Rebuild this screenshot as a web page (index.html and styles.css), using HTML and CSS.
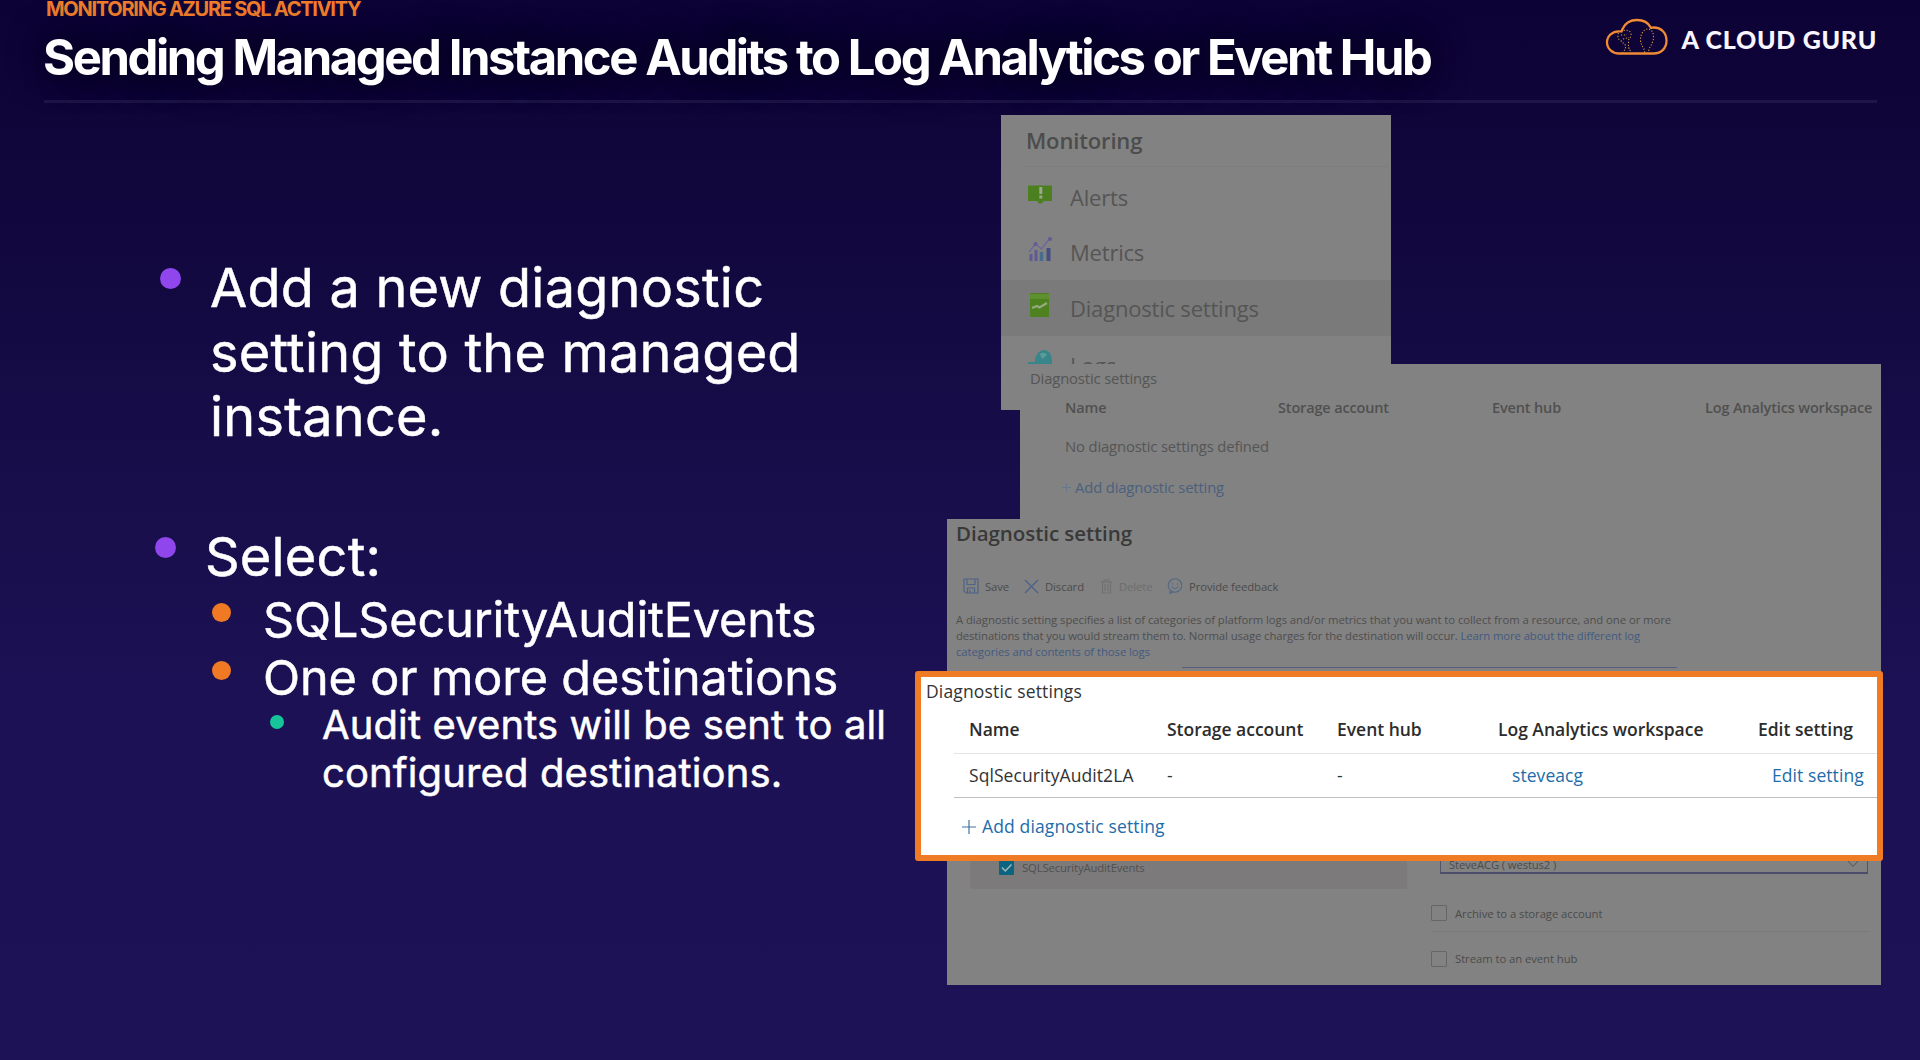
FILE: index.html
```html
<!DOCTYPE html>
<html lang="en">
<head>
<meta charset="utf-8">
<title>Sending Managed Instance Audits to Log Analytics or Event Hub</title>
<link rel="stylesheet" href="styles.css">
</head>
<body>
<main class="slide">
  <header class="header">
    <div class="titles">
      <p class="eyebrow">MONITORING AZURE SQL ACTIVITY</p>
      <h1 class="title">Sending Managed Instance Audits to Log Analytics or Event Hub</h1>
    </div>
    <div class="brand">
      <svg class="cloud" viewBox="0 0 66 42" width="66" height="42" fill="none">
        <path d="M15 37.5H49.5C57.500 37.500 62.500 32 62.500 24.800C62.500 17 57.500 11.500 49.500 11.500C48.700 11.500 47.900 11.600 47 11.800C44.500 7 39 4 33 4C26.500 4 21 7.500 18.500 13L17.500 15.500C16.600 15.300 15.800 15.300 14.800 15.300C8.500 15.300 3 20 3 26.300C3 32.800 8.500 37.500 15 37.500Z" stroke="#f08a35" stroke-width="2.3"/>
        <g stroke="#dd9a45" stroke-width="1.100" stroke-dasharray="1.200 1.700">
          <path d="M17 15.500C21 13 27 14 27 18.500C27 22 24 22.500 24.500 26C25 29 23 31 27.500 36.500"/>
          <path d="M14.500 17C13 21 14.500 24 17.500 25C20 26 18 28 21.500 29C22 32 21 34 18.500 36.500"/>
          <path d="M17 19H23M19 23L25 21.500"/>
          <path d="M40.500 36.500C41.500 33 36.500 30 36.500 24C36.500 17.500 40 13 44 13C48 13 49.500 17 49.500 21.500C49.500 28 44 32 44.500 36.500"/>
        </g>
      </svg>
      <span class="wordmark">A CLOUD GURU</span>
    </div>
  </header>

  <ul class="points">
    <li class="point point-first">Add a new diagnostic<br>setting to the managed<br>instance.</li>
    <li class="point point-select">Select:</li>
    <li class="sub">SQLSecurityAuditEvents</li>
    <li class="sub">One or more destinations</li>
    <li class="detail">Audit events will be sent to all<br>configured destinations.</li>
  </ul>

  <section class="shot menu">
    <h2 class="menu-title">Monitoring</h2>
    <div class="menu-item">
      <svg width="26" height="20" viewBox="0 0 26 20"><path d="M1 1.500H25V17H17L14.500 19.500H12L10 17H1Z" fill="#4c7f20"/><path d="M12.300 3H15.300V10H12.300ZM12.300 11.500H15.300V14.500H12.300Z" fill="#9ba88e"/></svg>
      <span>Alerts</span>
    </div>
    <div class="menu-item">
      <svg width="26" height="26" viewBox="0 0 26 26" fill="none"><path d="M4 18V25M9 14V25" stroke="#5f5b92" stroke-width="3"/><path d="M14.500 16V25" stroke="#466c8e" stroke-width="3.500"/><path d="M21.500 12V25" stroke="#464f83" stroke-width="4"/><path d="M2 16L8.500 8L14.500 13L23 2" stroke="#6d67a0" stroke-width="1.500"/><circle cx="8.500" cy="8" r="2" fill="#615c91"/><circle cx="23" cy="3" r="2" fill="#615c91"/></svg>
      <span>Metrics</span>
    </div>
    <div class="menu-item selected">
      <svg width="26" height="26" viewBox="0 0 26 26" fill="none"><rect x="3" y="1" width="19" height="24" rx="1" fill="#4d821f"/><path d="M3 2H22V7H3Z" fill="#5e902f"/><path d="M5 16L10 14L12.500 15.500L20 11" stroke="#96aa81" stroke-width="2.200"/></svg>
      <span>Diagnostic settings</span>
    </div>
    <div class="menu-item logs">
      <svg width="26" height="26" viewBox="0 0 26 26"><path d="M8 13C8 6 12 1 17 1S25 5 25 13V20H1V13Z" fill="#39868a"/><path d="M13 5Q17 2 20 6L15 10Z" fill="#5c9a9c"/></svg>
      <span>Logs</span>
    </div>
  </section>

  <section class="shot empty-list">
    <h2 class="list-title">Diagnostic settings</h2>
    <div class="list-head"><span>Name</span><span>Storage account</span><span>Event hub</span><span>Log Analytics workspace</span></div>
    <div class="list-empty">No diagnostic settings defined</div>
    <div class="list-add"><svg width="9" height="9" viewBox="0 0 9 9"><path d="M0 4.500H9M4.500 0V9" stroke="#68788c" stroke-width="1"/></svg>Add diagnostic setting</div>
  </section>

  <section class="shot editor">
    <h2 class="editor-title">Diagnostic setting</h2>
    <div class="toolbar">
      <span class="tool save"><svg width="16" height="16" viewBox="0 0 16 16" fill="none" stroke="#4d6488" stroke-width="1.200"><path d="M1 1H15V15H3L1 13ZM4 1V6.500H12V1M4.500 15V10H11.500V15M7 12V15"/></svg>Save</span>
      <span class="tool discard"><svg width="15" height="15" viewBox="0 0 15 15" stroke="#4a6289" stroke-width="1.300"><path d="M1 1L14 14M14 1L1 14"/></svg>Discard</span>
      <span class="tool delete"><svg width="13" height="15" viewBox="0 0 13 15" fill="none" stroke="#707070" stroke-width="1.100"><path d="M1 3H12M4 3V1H9V3M2.500 3V14H10.500V3M5 5V12M8 5V12"/></svg>Delete</span>
      <span class="tool"><svg width="16" height="16" viewBox="0 0 16 16" fill="none" stroke="#546886" stroke-width="1.100"><circle cx="8" cy="7.500" r="6.700"/><path d="M4.500 8.500Q8 13 11.500 8.500M5 5.500L6 6.500M10 6.500L11 5.500M3 13V15.500L6 14"/></svg>Provide feedback</span>
    </div>
    <p class="about">A diagnostic setting specifies a list of categories of platform logs and/or metrics that you want to collect from a resource, and one or more<br><span class="about-second">destinations that you would stream them to. Normal usage charges for the destination will occur. <a>Learn more about the different log</a></span><br><a>categories and contents of those logs</a></p>
    <div class="name-field"></div>
    <div class="form">
      <div class="categories">
        <div class="category"><svg width="15" height="15" viewBox="0 0 15 15"><rect width="15" height="15" rx="1" fill="#0b6580"/><path d="M3 7.500L6.300 11L12.500 4.500" fill="none" stroke="#a3b5ba" stroke-width="1.500"/></svg>SQLSecurityAuditEvents</div>
      </div>
      <div class="destinations">
        <div class="workspace"><span>SteveACG ( westus2 )</span><svg width="12" height="8" viewBox="0 0 12 8"><path d="M1 1L6 6.500L11 1" fill="none" stroke="#555" stroke-width="1"/></svg></div>
        <div class="option archive"><i class="box"></i>Archive to a storage account</div>
        <div class="option stream"><i class="box"></i>Stream to an event hub</div>
      </div>
    </div>
  </section>

  <section class="result">
    <h2 class="result-title">Diagnostic settings</h2>
    <div class="result-row result-head"><span>Name</span><span>Storage account</span><span>Event hub</span><span>Log Analytics workspace</span><span>Edit setting</span></div>
    <div class="result-row result-data"><span>SqlSecurityAudit2LA</span><span>-</span><span>-</span><a>steveacg</a><a>Edit setting</a></div>
    <div class="result-add"><svg width="14" height="14" viewBox="0 0 14 14"><path d="M0 7H14M7 0V14" stroke="#3e74a0" stroke-width="1.200"/></svg>Add diagnostic setting</div>
  </section>
</main>
</body>
</html>
```
FILE: styles.css
```css
* { box-sizing: border-box; margin: 0; padding: 0; }

.slide {
  position: relative;
  width: 1920px;
  height: 1060px;
  overflow: hidden;
  background: linear-gradient(#0d0236 0, #0f0539 110px, #180e4b 500px, #1c1154 700px, #1e1257 1060px);
  font-family: "Inter", sans-serif;
  color: #fff;
}

/* Header */
.header {
  display: flex;
  justify-content: space-between;
  height: 103px;
  margin: 0 43px 0 44px;
  border-bottom: 3px solid #1e1548;
}
.eyebrow {
  height: 21px;
  margin-left: 2px;
  font-size: 20px;
  font-weight: 700;
  line-height: 18px;
  letter-spacing: -1.26px;
  color: #ee7c2b;
}
.title {
  margin: 7px 0 0 -1px;
  font-size: 49px;
  font-weight: 700;
  line-height: 60px;
  letter-spacing: -2.44px;
  white-space: nowrap;
  text-shadow: 0 0 22px rgba(9, 5, 30, .9), 0 0 36px rgba(9, 5, 30, .8);
}
.brand { display: flex; gap: 11px; padding-top: 16px; }
.wordmark {
  font: 900 25px/47px "Lato", sans-serif;
  letter-spacing: .72px;
  color: #f8f6ff;
}

/* Bullet list */
.points { list-style: none; width: 900px; padding-top: 153px; white-space: nowrap; -webkit-text-stroke: .5px #fff; }
.point, .sub, .detail { display: flow-root; position: relative; }
.point { font-size: 54px; line-height: 64.5px; letter-spacing: .22px; }
.point-first { padding-left: 210px; }
.point-select { margin-top: 75.5px; padding-left: 205px; }
.sub { padding-left: 263px; font-size: 48.500px; line-height: 58px; letter-spacing: -.1px; }
.point-select + .sub { margin-top: 1.500px; }
.detail { margin-top: -6px; padding-left: 322px; font-size: 40px; line-height: 48px; letter-spacing: .12px; }
.point::before, .sub::before, .detail::before {
  content: "";
  position: absolute;
  border-radius: 50%;
}
.point::before { width: 21px; height: 21px; top: 12px; background: #8f46ec; }
.point-first::before { left: 160px; }
.point-select::before { left: 155px; }
.sub::before { left: 212px; top: 11.500px; width: 19px; height: 19px; background: #f07a23; }
.detail::before { left: 270px; top: 14px; width: 14px; height: 14px; background: #17c49a; }

/* Portal captures stacked on the slide */
.shot, .result { position: absolute; font-family: "Open Sans", sans-serif; white-space: nowrap; }
.shot { overflow: hidden; background: #828282; color: #555; }

.menu { left: 1001px; top: 115px; width: 390px; height: 295px; font-size: 22px; letter-spacing: -.2px; }
.menu-title {
  height: 52px;
  margin: 0 3px 2px 24px;
  padding-left: 1px;
  border-bottom: 1px solid #7c7c7c;
  font-size: 22px;
  font-weight: 600;
  line-height: 50px;
  letter-spacing: -.15px;
  color: #4c4c4c;
}
.menu-item { display: flex; align-items: center; gap: 17px; height: 55.500px; padding-left: 26px; }
.menu-item svg { position: relative; top: -3px; }
.selected { background: #7a7a7a; }
.logs { padding-top: 3px; }

.empty-list { left: 1020px; top: 364px; width: 861px; height: 155px; padding-left: 45px; font-size: 14.800px; letter-spacing: -.14px; }
.list-title { margin-left: -35px; font-size: 14.800px; font-weight: 400; line-height: 28px; }
.list-head {
  display: grid;
  grid-template-columns: 213px 214px 213px auto;
  padding-top: 1px;
  font-size: 14.500px;
  font-weight: 600;
  line-height: 30px;
  letter-spacing: -.15px;
  color: #505050;
}
.list-empty { line-height: 47px; }
.list-add { display: flex; align-items: center; gap: 4px; margin-left: -3px; line-height: 34px; color: #4b607e; }

.editor { left: 947px; top: 519px; width: 934px; height: 466px; font-size: 11.300px; color: #4b4b4b; }
.editor-title { padding: 1px 0 0 9px; font-size: 20.500px; font-weight: 600; line-height: 27px; letter-spacing: -.05px; color: #393939; }
.toolbar { display: flex; align-items: center; height: 65px; padding: 13px 0 0 16px; }
.tool { display: flex; align-items: center; gap: 6px; letter-spacing: -.1px; }
.save { width: 61px; }
.discard { width: 76px; }
.delete { width: 67px; color: #6c6c6c; }
.about { padding-left: 9px; line-height: 16px; letter-spacing: -.055px; color: #4e4e4e; }
.about-second { letter-spacing: -.09px; }
.about a { color: #435a80; }
.name-field { width: 495px; height: 3px; margin: 7px 0 0 235px; border-top: 1px solid #565d7d; }
.form { display: grid; grid-template-columns: 437px 439px; justify-content: end; column-gap: 24px; height: 156px; margin: 158px 11px 0 0; }
.category { display: flex; align-items: center; gap: 8px; height: 61px; padding: 17px 0 0 29px; background: #7c7a7b; letter-spacing: -.13px; color: #505050; }
.destinations { padding-top: 25px; }
.workspace {
  display: flex;
  align-items: center;
  justify-content: space-between;
  width: 428px;
  height: 21px;
  margin-left: 9px;
  padding: 2px 8px 0 8px;
  border: 1px solid #55556a;
  border-bottom: 2px solid #4c4c6b;
  letter-spacing: -.13px;
}
.option { display: flex; align-items: center; gap: 8px; letter-spacing: -.06px; }
.archive { height: 37px; margin-top: 21px; border-bottom: 1px solid #7a7a7a; }
.stream { height: 53px; }
.box { width: 16px; height: 16px; border: 1px solid #666; border-radius: 1px; }

/* Highlighted capture */
.result {
  left: 915px;
  top: 671px;
  width: 968px;
  height: 190px;
  border: 6px solid #f07b25;
  border-radius: 3px;
  background: #fff;
  color: #333;
  font-size: 17.500px;
  letter-spacing: .07px;
}
.result-title { padding-left: 5px; font-size: 17.500px; font-weight: 400; line-height: 28px; letter-spacing: .15px; }
.result-row { display: grid; grid-template-columns: 198px 170px 161px 260px auto; margin-left: 33px; padding-left: 15px; }
.result-head { border-bottom: 1px solid #e3e3e3; font-weight: 600; line-height: 48px; letter-spacing: -.02px; color: #2c2c2c; }
.result-data { border-bottom: 1px solid #bfbfbf; line-height: 43px; }
.result a { padding-left: 14px; color: #226ca9; }
.result-add { display: flex; align-items: center; gap: 6px; padding-left: 41px; line-height: 57px; letter-spacing: .13px; color: #226ca9; }
```
